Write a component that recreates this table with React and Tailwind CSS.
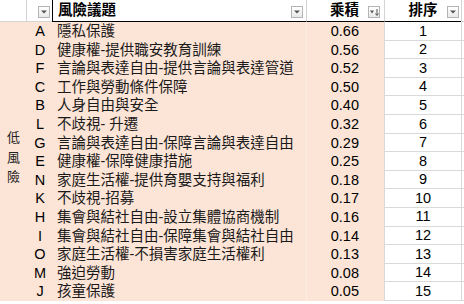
import React from 'react';

const rows = [
  ['A', '隱私保護', '0.66', 1],
  ['D', '健康權-提供職安教育訓練', '0.56', 2],
  ['F', '言論與表達自由-提供言論與表達管道', '0.52', 3],
  ['C', '工作與勞動條件保障', '0.50', 4],
  ['B', '人身自由與安全', '0.40', 5],
  ['L', '不歧視- 升遷', '0.32', 6],
  ['G', '言論與表達自由-保障言論與表達自由', '0.29', 7],
  ['E', '健康權-保障健康措施', '0.25', 8],
  ['N', '家庭生活權-提供育嬰支持與福利', '0.18', 9],
  ['K', '不歧視-招募', '0.17', 10],
  ['H', '集會與結社自由-設立集體協商機制', '0.16', 11],
  ['I', '集會與結社自由-保障集會與結社自由', '0.14', 12],
  ['O', '家庭生活權-不損害家庭生活權利', '0.13', 13],
  ['M', '強迫勞動', '0.08', 14],
  ['J', '孩童保護', '0.05', 15],
];

const Drop = ({ sort = false }) => (
  <span className="flex h-[12px] w-[12px] items-center justify-center gap-[1px] border border-[#b4b4b4] bg-gradient-to-b from-white to-[#e9e9e9]">
    <svg width={sort ? 4 : 6} height="4" viewBox={sort ? '0 0 4 3' : '0 0 6 3'}>
      <path d={sort ? 'M0 0h4L2 3z' : 'M0 0h6L3 3z'} fill="#555" />
    </svg>
    {sort && (
      <svg width="4" height="7" viewBox="0 0 4 7">
        <path d="M2 0v6M0.5 4.5L2 6.5 3.5 4.5" stroke="#555" strokeWidth="1" fill="none" />
      </svg>
    )}
  </span>
);

export default function App() {
  return (
    <div className="h-[304px] w-[464px] overflow-hidden bg-white font-['Liberation_Sans','Noto_Sans_CJK_TC',sans-serif] text-[14.5px] text-black">
      {/* header */}
      <div className="flex h-[22px]">
        <div className="w-[27px] border-r border-b border-[#d4d4d4]" />
        <div className="flex w-[25px] items-end justify-end border-b border-[#d4d4d4] pb-[3px] pr-[2px]">
          <Drop />
        </div>
        <div className="flex w-[254px] items-end justify-between border-b border-l border-black pb-[2px] pl-[5px] pr-[3px]">
          <span className="font-bold leading-[18px]">風險議題</span>
          <span className="mb-[1px]"><Drop /></span>
        </div>
        <div className="flex w-[78px] items-end justify-end gap-[9px] border-b border-l border-black border-l-[#d4d4d4] pb-[2px] pr-[4px]">
          <span className="font-bold leading-[18px]">乘積</span>
          <span className="mb-[1px]"><Drop sort /></span>
        </div>
        <div className="relative flex w-[77px] items-end justify-center border-b border-l border-black border-l-[#d4d4d4] pb-[2px]">
          <span className="font-bold leading-[18px]">排序</span>
          <span className="absolute bottom-[3px] right-[2px]"><Drop /></span>
        </div>
        <div className="flex-1 border-l border-b border-[#d4d4d4]" />
      </div>

      {/* body */}
      <div className="flex">
        <div className="flex w-[27px] items-center justify-center bg-[#fce4d6] pb-[8px]">
          <div className="flex flex-col items-center text-[13px] leading-[19.5px] text-[#222]">
            <span>低</span>
            <span>風</span>
            <span>險</span>
          </div>
        </div>
        <div className="flex flex-col">
          {rows.map(([id, name, score, rank]) => (
            <div key={id} className="flex h-[18.6px] items-center leading-none">
              <div className="flex h-full w-[25px] items-center justify-center bg-[#fce4d6] pl-[1px]">{id}</div>
              <div className="flex h-full w-[254px] items-center whitespace-nowrap bg-[#fce4d6] pl-[5px] text-[#1a1a1a]">{name}</div>
              <div className="flex h-full w-[78px] items-center justify-end border-l border-[#fdeee5] bg-[#fce4d6] pr-[25px]">{score}</div>
              <div className="flex h-full w-[77px] items-center justify-center border-b border-l border-[#d9d9d9]">{rank}</div>
              <div className="h-full w-[3px] border-b border-l border-[#d9d9d9]" />
            </div>
          ))}
        </div>
      </div>
    </div>
  );
}
